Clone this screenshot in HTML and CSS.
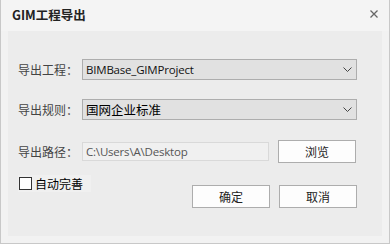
FILE: index.html
```html
<!DOCTYPE html>
<html lang="zh-CN">
<head>
    <meta charset="UTF-8">
    <title>GIM工程导出</title>
    <link rel="stylesheet" href="styles.css">
</head>
<body>
    <div class="window">
        <div class="title-bar">
            <span class="title">GIM工程导出</span>
            <svg class="close" width="8" height="8" viewBox="0 0 8 8">
                <path d="M0.5 0.5 L7.5 7.5 M7.5 0.5 L0.5 7.5" stroke="#666" stroke-width="1.3"/>
            </svg>
        </div>
        <div class="frame">
            <div class="panel">
                <div class="row row-project">
                    <span class="label">导出工程：</span>
                    <div class="combo">
                        <span class="combo-text">BIMBase_GIMProject</span>
                        <svg class="chevron" width="9" height="5" viewBox="0 0 9 5">
                            <path d="M0.5 0.5 L4.5 4.5 L8.5 0.5" fill="none" stroke="#444" stroke-width="1"/>
                        </svg>
                    </div>
                </div>
                <div class="row row-rule">
                    <span class="label">导出规则：</span>
                    <div class="combo">
                        <span class="combo-text cjk">国网企业标准</span>
                        <svg class="chevron" width="9" height="5" viewBox="0 0 9 5">
                            <path d="M0.5 0.5 L4.5 4.5 L8.5 0.5" fill="none" stroke="#444" stroke-width="1"/>
                        </svg>
                    </div>
                </div>
                <div class="row row-path">
                    <span class="label">导出路径：</span>
                    <div class="path-box">C:\Users\A\Desktop</div>
                    <button class="button">浏览</button>
                </div>
                <div class="bottom">
                    <label class="check">
                        <span class="check-box"></span>
                        <span class="check-text">自动完善</span>
                    </label>
                    <div class="actions">
                        <button class="button">确定</button>
                        <button class="button">取消</button>
                    </div>
                </div>
            </div>
        </div>
    </div>
</body>
</html>
```

FILE: styles.css
```css
body {
    margin: 0;
    background: #f0f0f0;
    font-family: "Noto Sans CJK SC", "Noto Sans", sans-serif;
    font-size: 12px;
}

.window {
    width: 390px;
    height: 244px;
    box-sizing: border-box;
    border: 1px solid #c8c8c8;
    border-top: none;
    background: #f2f2f2;
}

/* Title bar */
.title-bar {
    height: 31px;
    display: flex;
    align-items: center;
    justify-content: space-between;
    padding: 0 11px 0 11px;
    background: #f4f4f4;
    box-sizing: border-box;
}

.title {
    font-weight: bold;
    font-size: 12.5px;
    color: #222;
    padding-bottom: 2px;
}

.close {
    margin-bottom: 3px;
}

.frame {
    padding: 0 7px 7px 7px;
}

.panel {
    height: 205px;
    box-sizing: border-box;
    background: #ececec;
    padding: 28px 25px 0 10px;
}

.row {
    display: flex;
    align-items: center;
}

.label {
    width: 64px;
    color: #444;
    line-height: 16px;
    white-space: nowrap;
}

.row-rule {
    margin-top: 19px;
}

.row-path {
    margin-top: 20px;
}

/* Combo boxes */
.combo {
    flex: 1;
    height: 21px;
    box-sizing: border-box;
    border: 1px solid #adadad;
    background: #e1e1e1;
    display: flex;
    align-items: center;
    justify-content: space-between;
    padding: 0 4px 0 3px;
}

.combo-text {
    font-family: "Open Sans", "Noto Sans", sans-serif;
    font-size: 11.5px;
    color: #111;
    letter-spacing: -0.2px;
}

.combo-text.cjk {
    font-family: "Noto Sans CJK SC", sans-serif;
    font-size: 12.5px;
    letter-spacing: 0;
    color: #000;
}

/* Path row */
.path-box {
    width: 187px;
    height: 19px;
    box-sizing: border-box;
    border: 1px solid #d9d9d9;
    background: #f0f0f0;
    color: #555;
    font-family: "Open Sans", "Noto Sans", sans-serif;
    font-size: 11.5px;
    line-height: 17px;
    padding-left: 3px;
    letter-spacing: -0.2px;
}

.button {
    width: 78px;
    height: 23px;
    box-sizing: border-box;
    border: 1px solid #adadad;
    background: #fdfdfd;
    font-family: "Noto Sans CJK SC", sans-serif;
    font-size: 12px;
    color: #222;
    padding: 0;
}

.row-path .button {
    margin-left: 9px;
}

/* Bottom area */
.bottom {
    display: flex;
    justify-content: space-between;
    margin-top: 12px;
}

.check {
    display: flex;
    align-items: center;
    height: 17px;
    padding-right: 8px;
    background: #f0f0f0;
}

.check-box {
    width: 13px;
    height: 13px;
    box-sizing: border-box;
    border: 1px solid #333;
    background: #fff;
    margin-left: 1px;
}

.check-text {
    margin-left: 3px;
    color: #000;
}

.actions {
    display: flex;
    gap: 9px;
    margin-top: 10px;
}
```
